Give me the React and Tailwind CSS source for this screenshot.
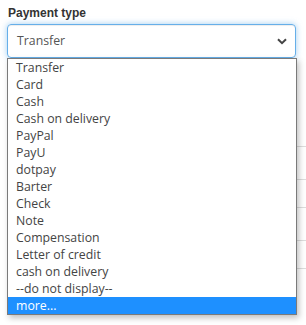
import React from "react";

const items = [
  "Transfer",
  "Card",
  "Cash",
  "Cash on delivery",
  "PayPal",
  "PayU",
  "dotpay",
  "Barter",
  "Check",
  "Note",
  "Compensation",
  "Letter of credit",
  "cash on delivery",
  "--do not display--",
];

export default function App() {
  return (
    <div className="relative w-[306px] h-[325px] overflow-hidden bg-white" style={{ fontFamily: "'Liberation Sans', Arial, sans-serif" }}>
      <div className="pl-[7px] pt-[6px]">
        <div className="pl-[1px] text-[12px] font-bold leading-[15px] text-[#333]">Payment type</div>
        <div className="mt-[3px] flex h-[34px] w-[289px] items-center justify-between rounded-[4px] border border-[#66afe9] pl-[9px] pr-[8px] shadow-[inset_0_1px_1px_rgba(0,0,0,0.075),0_0_6px_rgba(102,175,233,0.6)]">
          <span className="text-[12.3px] text-[#555]" style={{ fontFamily: "'Open Sans', sans-serif" }}>Transfer</span>
          <svg width="10" height="7" viewBox="0 0 10 7" className="mt-[1px]">
            <path d="M1 1.2 L5 5.2 L9 1.2" fill="none" stroke="#444" strokeWidth="2" />
          </svg>
        </div>
        <div className="mt-[1px] flex flex-col border-l border-[#ddd]">
          <div className="h-[87px]" />
          <div className="h-[33px] border-t border-[#ddd]" />
          <div className="h-[28px] border-t border-[#ddd]" />
          <div className="h-[33px] border-t border-[#ddd]" />
          <div className="h-[28px] border-t border-[#ddd]" />
          <div className="h-[40px] border-t border-[#ddd]" />
        </div>
      </div>
      <div
        className="absolute left-[7px] top-[58px] w-[290px] border border-[#7a7a7a] bg-white shadow-[2px_3px_6px_rgba(0,0,0,0.25)]"
        style={{ fontFamily: "'Open Sans', sans-serif" }}
      >
        {items.map((t) => (
          <div key={t} className="h-[17px] pl-[8px] text-[12.3px] leading-[17px] text-[#444]">
            {t}
          </div>
        ))}
        <div className="h-[17px] bg-[#1e90ff] pl-[8px] text-[12.3px] leading-[17px] text-white">more...</div>
      </div>
    </div>
  );
}
